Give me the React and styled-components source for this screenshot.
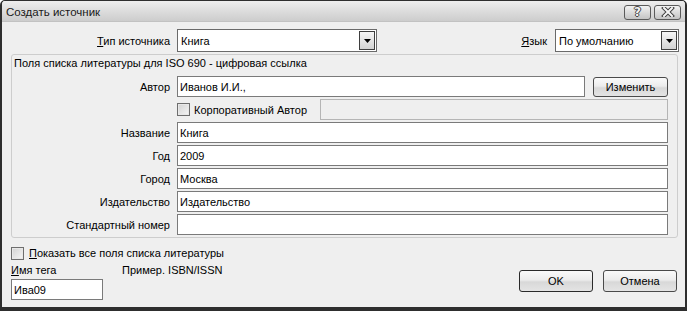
import React from "react";
import styled, { createGlobalStyle } from "styled-components";

const GlobalStyle = createGlobalStyle`
  html, body { margin: 0; padding: 0; background: #ffffff; }
  body { font-family: "Liberation Sans", Arial, sans-serif; font-size: 11px; color: #000; }
  * { box-sizing: border-box; }
`;

const Window = styled.div`
  width: 687px;
  height: 311px;
  background: #efefef;
  border-style: solid;
  border-color: #2e2e2e;
  border-width: 1px 2px 4px 2px;
  border-radius: 5px 5px 0 0;
  display: flex;
  flex-direction: column;
  overflow: hidden;
`;

const TitleBar = styled.div`
  height: 21px;
  flex: none;
  display: flex;
  align-items: center;
  padding: 0 4px 0 4px;
  background: linear-gradient(#eeeeee 0%, #dedede 45%, #cdcdcd 100%);
  border-bottom: 1px solid #c2c2c2;
`;

const Title = styled.div`
  flex: 1;
  font-size: 11.5px;
  color: #1a1a1a;
  padding-top: 2px;
`;

const TitleButton = styled.div`
  width: 27px;
  height: 15px;
  margin-left: ${(p) => p.$gap || 0}px;
  border: 1px solid #5a5a5a;
  border-radius: 3px;
  background: linear-gradient(#f2f2f2, #c4c4c4);
  display: flex;
  align-items: center;
  justify-content: center;
  margin-top: 2px;
`;

const HelpGlyph = styled.span`
  font-family: "DejaVu Sans", sans-serif;
  font-weight: bold;
  font-size: 12px;
  line-height: 12px;
  color: #f4f4f4;
  text-shadow: 1px 0 0 #444, -1px 0 0 #444, 0 1px 0 #444, 0 -1px 0 #444;
`;

const Body = styled.div`
  flex: 1;
  display: flex;
  flex-direction: column;
  padding: 7px 6px 0 7px;
`;

const TopRow = styled.div`
  display: flex;
  align-items: center;
  height: 23px;
`;

const Label = styled.label`
  display: block;
  width: ${(p) => (p.$width ? `${p.$width}px` : "auto")};
  text-align: ${(p) => (p.$align || "left")};
  white-space: nowrap;
  margin-right: ${(p) => p.$mr || 0}px;
`;

const Key = styled.span`
  text-decoration: underline;
`;

const Spacer = styled.div`
  flex: 1;
`;

const Select = styled.div`
  width: ${(p) => p.$width}px;
  height: 23px;
  border: 1px solid #6a6a6a;
  background: #fff;
  display: flex;
  align-items: stretch;
  padding: 1px 1px 1px 3px;
`;

const SelectText = styled.div`
  flex: 1;
  display: flex;
  align-items: center;
`;

const ArrowButton = styled.div`
  width: 16px;
  border: 1px solid #3e3e3e;
  background: linear-gradient(#f6f6f6, #d2d2d2);
  display: flex;
  align-items: center;
  justify-content: center;
`;

const Group = styled.div`
  margin: 2px 1px 0 2px;
  border: 1px solid #cdcdcd;
  border-radius: 3px;
  padding: 1px 9px 2px 2px;
  display: flex;
  flex-direction: column;
`;

const Legend = styled.div`
  line-height: 15px;
  height: 15px;
  margin-bottom: 5px;
`;

const Grid = styled.div`
  display: grid;
  grid-template-columns: 156px 1fr;
  column-gap: 7px;
  row-gap: 2px;
  grid-auto-rows: 21px;
  align-items: center;
`;

const RowLabel = styled.div`
  text-align: right;
  white-space: nowrap;
`;

const Field = styled.div`
  display: flex;
  align-items: center;
  height: 21px;
`;

const Input = styled.div`
  flex: ${(p) => (p.$width ? "none" : 1)};
  width: ${(p) => (p.$width ? `${p.$width}px` : "auto")};
  height: 21px;
  border: 1px solid ${(p) => (p.$disabled ? "#b5b5b5" : "#7a7a7a")};
  background: ${(p) => (p.$disabled ? "#efefef" : "#fff")};
  display: flex;
  align-items: center;
  padding-left: 2px;
  white-space: nowrap;
`;

const Button = styled.div`
  width: ${(p) => p.$width}px;
  height: ${(p) => p.$height}px;
  border: 1px solid ${(p) => (p.$default ? "#2a2a2a" : "#4a4a4a")};
  border-radius: 3px;
  background: linear-gradient(#fafafa 0%, #ececec 45%, #d8d8d8 55%, #e4e4e4 100%);
  display: flex;
  align-items: center;
  justify-content: center;
  flex: none;
  margin-left: ${(p) => p.$ml || 0}px;
`;

const CheckBox = styled.div`
  width: 13px;
  height: 13px;
  flex: none;
  border: 1px solid #6e6e6e;
  background: linear-gradient(135deg, #d2d2d2, #f6f6f6);
  box-shadow: inset 0 0 0 1px #e8e8e8;
`;

const CheckRow = styled.div`
  display: flex;
  align-items: center;
  gap: 5px;
  height: 16px;
`;

const CheckLabel = styled.span`
  white-space: nowrap;
  margin-left: ${(p) => p.$ml || 0}px;
`;

const Bottom = styled.div`
  display: flex;
  justify-content: space-between;
  align-items: flex-end;
  margin-top: 7px;
  padding-left: 2px;
`;

const LeftCol = styled.div`
  display: flex;
  flex-direction: column;
`;

const TagLabels = styled.div`
  display: flex;
  height: 14px;
  align-items: center;
  margin-top: 2px;
`;

const TagInputWrap = styled.div`
  margin-top: 2px;
  display: flex;
`;

const Buttons = styled.div`
  display: flex;
  margin-bottom: 8px;
  margin-right: 2px;
`;

const Arrow = () => (
  <svg width="7" height="4" viewBox="0 0 7 4">
    <path d="M0 0 H7 L3.5 4 Z" fill="#000" />
  </svg>
);

const CloseIcon = () => (
  <svg width="14" height="10" viewBox="0 0 14 10">
    <path d="M3 1 L11 9 M11 1 L3 9" stroke="#404040" strokeWidth="4" strokeLinecap="square" />
    <path d="M3 1 L11 9 M11 1 L3 9" stroke="#f6f6f6" strokeWidth="2" strokeLinecap="square" />
  </svg>
);

const rows = [
  ["Название", "Книга"],
  ["Год", "2009"],
  ["Город", "Москва"],
  ["Издательство", "Издательство"],
  ["Стандартный номер", ""],
];

export default function App() {
  return (
    <>
      <GlobalStyle />
      <Window>
        <TitleBar>
          <Title>Создать источник</Title>
          <TitleButton>
            <HelpGlyph>?</HelpGlyph>
          </TitleButton>
          <TitleButton $gap={3}>
            <CloseIcon />
          </TitleButton>
        </TitleBar>
        <Body>
          <TopRow>
            <Label $width={161} $align="right" $mr={7}>
              <Key>Т</Key>ип источника
            </Label>
            <Select $width={200}>
              <SelectText>Книга</SelectText>
              <ArrowButton>
                <Arrow />
              </ArrowButton>
            </Select>
            <Spacer />
            <Label $mr={8}>
              <Key>Я</Key>зык
            </Label>
            <Select $width={124}>
              <SelectText>По умолчанию</SelectText>
              <ArrowButton>
                <Arrow />
              </ArrowButton>
            </Select>
          </TopRow>
          <Group>
            <Legend>Поля списка литературы для ISO 690 - цифровая ссылка</Legend>
            <Grid>
              <RowLabel>Автор</RowLabel>
              <Field>
                <Input>Иванов И.И.,</Input>
                <Button $width={75} $height={20} $ml={8}>
                  Изменить
                </Button>
              </Field>
              <div />
              <Field>
                <CheckBox />
                <CheckLabel $ml={4}>Корпоративный Автор</CheckLabel>
                <Spacer />
                <Input $width={348} $disabled />
              </Field>
              {rows.map(([label, value]) => (
                <React.Fragment key={label}>
                  <RowLabel>{label}</RowLabel>
                  <Field>
                    <Input>{value}</Input>
                  </Field>
                </React.Fragment>
              ))}
            </Grid>
          </Group>
          <Bottom>
            <LeftCol>
              <CheckRow>
                <CheckBox />
                <CheckLabel>
                  <Key>П</Key>оказать все поля списка литературы
                </CheckLabel>
              </CheckRow>
              <TagLabels>
                <Label $width={111}>
                  <Key>И</Key>мя тега
                </Label>
                <Label>Пример. ISBN/ISSN</Label>
              </TagLabels>
              <TagInputWrap>
                <Input $width={92}>Ива09</Input>
              </TagInputWrap>
            </LeftCol>
            <Buttons>
              <Button $width={74} $height={22} $default>
                OK
              </Button>
              <Button $width={74} $height={22} $ml={10}>
                Отмена
              </Button>
            </Buttons>
          </Bottom>
        </Body>
      </Window>
    </>
  );
}
